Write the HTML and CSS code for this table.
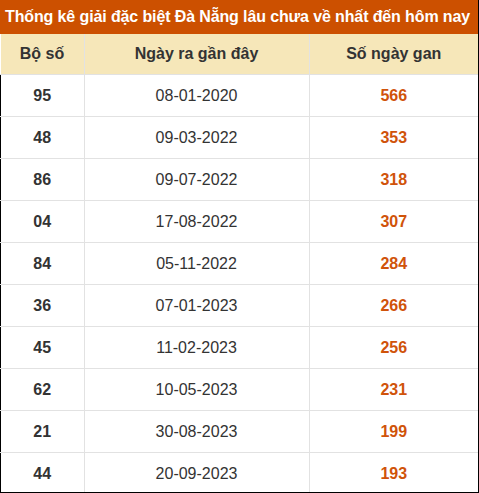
FILE: index.html
```html
<!DOCTYPE html>
<html lang="vi">
<head>
<meta charset="utf-8">
<link rel="stylesheet" href="styles.css">
</head>
<body>
<div class="frame">
  <div class="title">Thống kê giải đặc biệt Đà Nẵng lâu chưa về nhất đến hôm nay</div>
  <table class="gan">
    <thead>
      <tr><th class="c1">Bộ số</th><th class="c2">Ngày ra gần đây</th><th class="c3">Số ngày gan</th></tr>
    </thead>
    <tbody>
      <tr><td class="num">95</td><td class="date">08-01-2020</td><td class="days">566</td></tr>
      <tr><td class="num">48</td><td class="date">09-03-2022</td><td class="days">353</td></tr>
      <tr><td class="num">86</td><td class="date">09-07-2022</td><td class="days">318</td></tr>
      <tr><td class="num">04</td><td class="date">17-08-2022</td><td class="days">307</td></tr>
      <tr><td class="num">84</td><td class="date">05-11-2022</td><td class="days">284</td></tr>
      <tr><td class="num">36</td><td class="date">07-01-2023</td><td class="days">266</td></tr>
      <tr><td class="num">45</td><td class="date">11-02-2023</td><td class="days">256</td></tr>
      <tr><td class="num">62</td><td class="date">10-05-2023</td><td class="days">231</td></tr>
      <tr><td class="num">21</td><td class="date">30-08-2023</td><td class="days">199</td></tr>
      <tr><td class="num">44</td><td class="date">20-09-2023</td><td class="days">193</td></tr>
    </tbody>
  </table>
</div>
</body>
</html>
```
FILE: styles.css
```css
html, body {
  margin: 0;
  padding: 0;
  background: #fff;
}
.frame {
  width: 479px;
  height: 493px;
  box-sizing: border-box;
  overflow: hidden;
  border-right: 1px solid #000;
  border-bottom: 1px solid #000;
  font-family: "Liberation Sans", Arial, sans-serif;
  color: #333;
}
.title {
  height: 34px;
  line-height: 34px;
  background: #cc5000;
  color: #fff;
  font-weight: bold;
  font-size: 16px;
  letter-spacing: -0.12px;
  padding-left: 5px;
  white-space: nowrap;
}
.gan {
  width: 478px;
  border-collapse: collapse;
  table-layout: fixed;
}
.gan th, .gan td {
  padding: 0;
  text-align: center;
  border: 1px solid #e2e2e2;
}
.gan tr > :first-child { border-left: none; }
.gan tr > :last-child { border-right: none; }
.gan tbody td:first-child { border-left: 1px solid #000; }
.gan th {
  height: 40px;
  background: #f6e7b9;
  font-size: 16px;
  font-weight: bold;
  color: #333;
  border-top: none;
}
.c1 { width: 83px; }
.c2 { width: 224px; }
.gan td {
  height: 41px;
  font-size: 16px;
}
.num { font-weight: bold; }
.date { font-weight: normal; }
.days {
  font-weight: bold;
  font-size: 18px;
  color: #d0530a;
}
```
